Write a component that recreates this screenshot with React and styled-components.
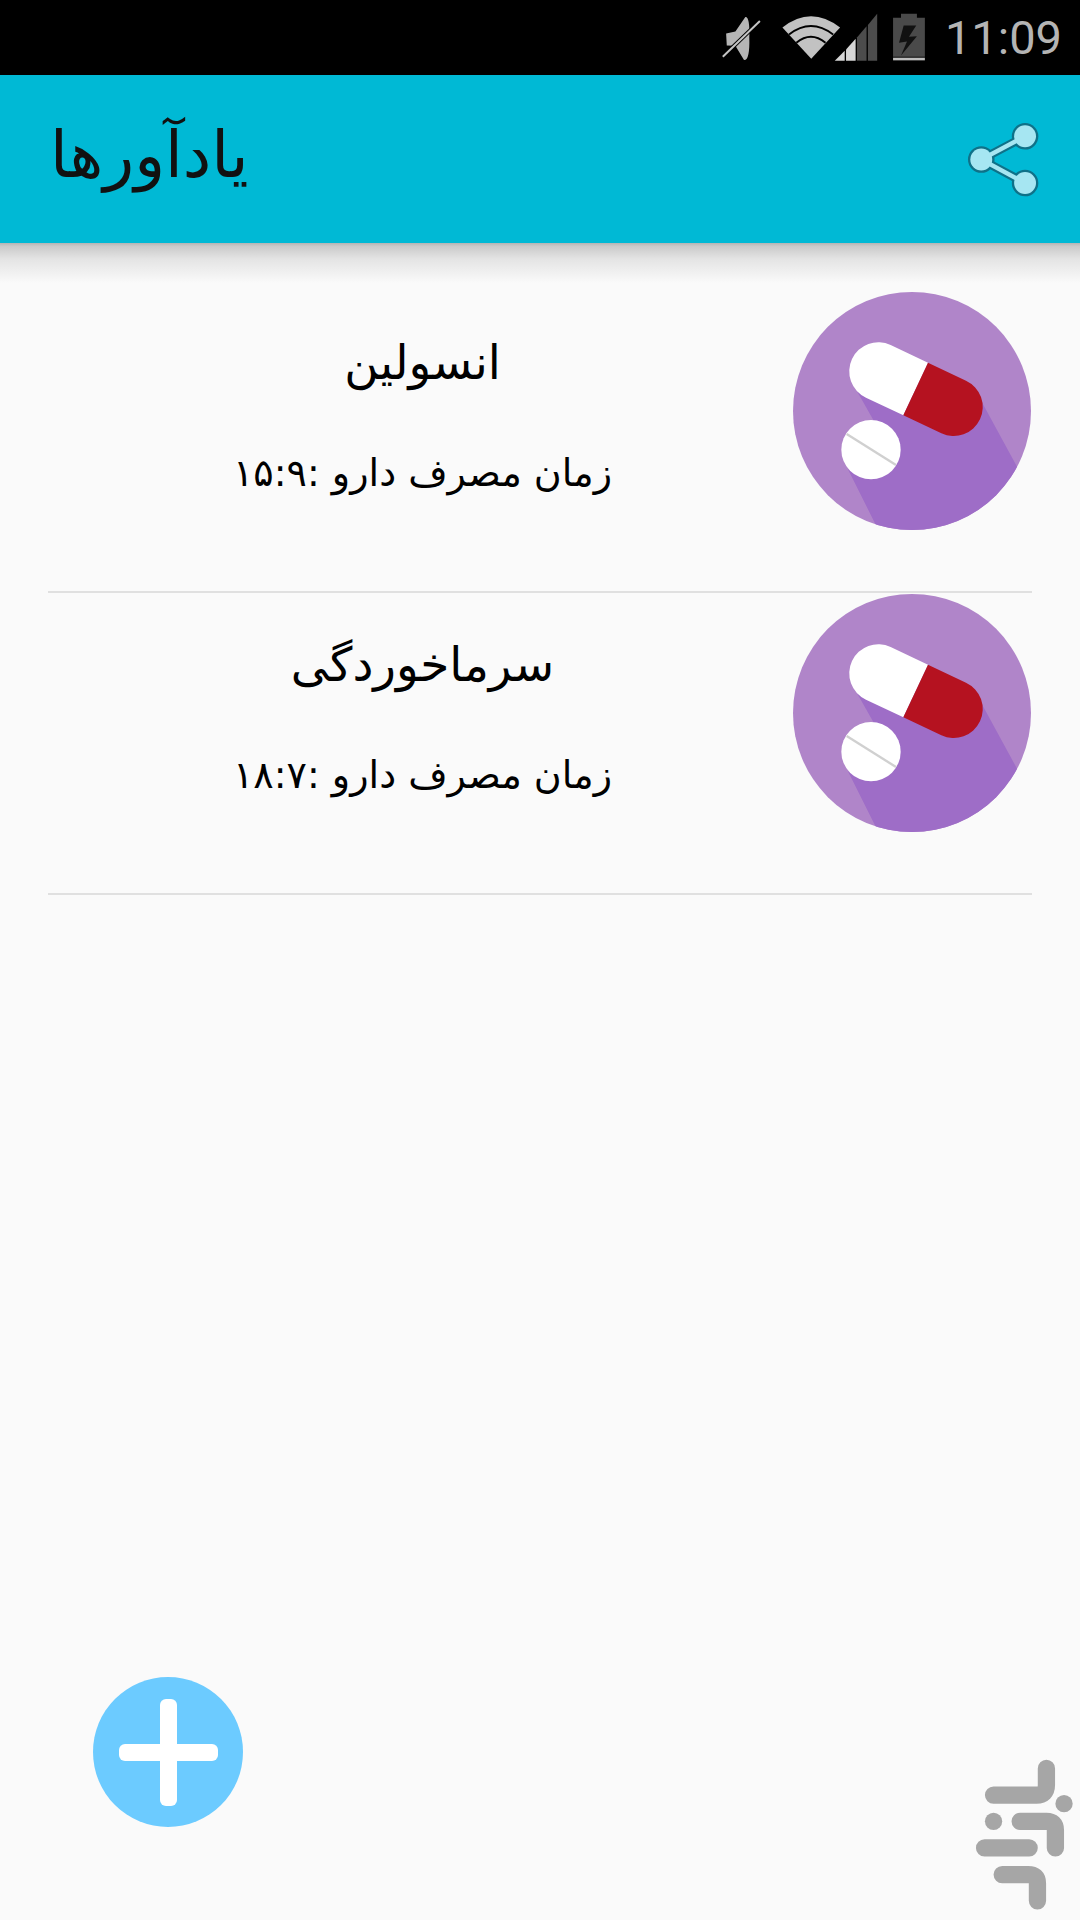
import React from 'react';
import styled, { createGlobalStyle } from 'styled-components';

const reminders = [
    { id: 1, name: 'انسولین', time: '۱۵:۹' },
    { id: 2, name: 'سرماخوردگی', time: '۱۸:۷' },
];

function StatusIcons() {
    return (
        <StatusSvg viewBox="115 30 625 160">
            <path d="M132 98 L160 92 L190 48 Q204 46 202 110 Q204 180 186 178 L160 135 L134 134 Z" fill="#b5b5b5" />
            <path d="M122 168 L234 60" stroke="#000" strokeWidth="12" fill="none" />
            <path d="M122 168 L234 60" stroke="#c4c4c4" strokeWidth="6" fill="none" />
            <path d="M302 80 Q388 12 476 80 L389 174 Z" fill="#c2c2c2" />
            <path d="M322 101 Q388 50 455 101" stroke="#000" strokeWidth="6" fill="none" />
            <path d="M344 126 Q388 90 432 126" stroke="#000" strokeWidth="6" fill="none" />
            <path d="M460 180 L490 150 V180 Z" fill="#d6d6d6" />
            <path d="M494 146 L523 114 V180 H494 Z" fill="#d6d6d6" />
            <path d="M527 110 L556 76 V180 H527 Z" fill="#4c4c4c" />
            <path d="M560 72 L588 38 V180 H560 Z" fill="#4c4c4c" />
            <path d="M636 50 H660 V38 H708 V50 H732 V168 H636 Z" fill="#4a4a4a" />
            <rect x="636" y="171" width="96" height="8" fill="#bdbdbd" />
            <path d="M706 74 L668 74 L654 126 L678 122 L660 164 L708 106 L684 108 Z" fill="#111" />
        </StatusSvg>
    );
}

function ShareIcon() {
    return (
        <ShareSvg viewBox="860 360 220 230">
            <path d="M1035 405 L903 475 L1035 546" stroke="#0f7188" strokeWidth="26" fill="none" />
            <circle cx="1035" cy="405" r="40" fill="#0f7188" />
            <circle cx="903" cy="475" r="40" fill="#0f7188" />
            <circle cx="1035" cy="546" r="40" fill="#0f7188" />
            <path d="M1035 405 L903 475 L1035 546" stroke="#a6e6f2" strokeWidth="13" fill="none" />
            <circle cx="1035" cy="405" r="33" fill="#a6e6f2" />
            <circle cx="903" cy="475" r="33" fill="#a6e6f2" />
            <circle cx="1035" cy="546" r="33" fill="#a6e6f2" />
        </ShareSvg>
    );
}

function PillIcon({ id }) {
    return (
        <PillSvg viewBox="70 36 712 714">
            <defs>
                <clipPath id={id}>
                    <circle cx="426" cy="393" r="357" />
                </clipPath>
            </defs>
            <circle cx="426" cy="393" r="357" fill="#b085c9" />
            <path
                d="M262 335 L635 365 L790 650 L790 800 L350 800 L235 570 L310 420 Z"
                fill="#9e6dc7"
                clipPath={`url(#${id})`}
            />
            <path d="M474 248 L362 195 A87 87 0 0 0 288 353 L400 406 Z" fill="#fff" />
            <path d="M474 248 L588 302 A87 87 0 0 1 514 460 L400 406 Z" fill="#b51220" />
            <circle cx="303" cy="509" r="89" fill="#fff" />
            <path d="M230 462 L378 555" stroke="#d0d0d0" strokeWidth="7" />
        </PillSvg>
    );
}

function WatermarkIcon() {
    return (
        <WatermarkSvg viewBox="0 0 391 570">
            <g stroke="#a6a6a6" strokeWidth="52" strokeLinecap="round" fill="none">
                <path d="M290 115 V165 Q290 195 260 195 H131" />
                <path d="M211 274 H290 Q317 274 317 300 V354" />
                <path d="M104 354 H238" />
                <path d="M157 434 H235 Q263 434 263 460 V513" />
            </g>
            <circle cx="343" cy="221" r="26" fill="#a6a6a6" />
            <circle cx="131" cy="274" r="26" fill="#a6a6a6" />
        </WatermarkSvg>
    );
}

export default function App() {
    return (
        <Page>
            <GlobalStyle />
            <StatusBar>
                <StatusIcons />
                <Clock>11:09</Clock>
            </StatusBar>
            <AppBar>
                <Title dir="rtl">یادآورها</Title>
                <ShareIcon />
            </AppBar>
            <List>
                {reminders.map((item) => (
                    <Row key={item.id}>
                        <RowText dir="rtl">
                            <DrugName>{item.name}</DrugName>
                            <DrugTime>زمان مصرف دارو :{item.time}</DrugTime>
                        </RowText>
                        <PillIcon id={`pill-clip-${item.id}`} />
                    </Row>
                ))}
            </List>
            <Fab>
                <PlusSvg viewBox="0 0 99 107">
                    <rect x="0" y="45" width="99" height="17" rx="6" fill="#fff" />
                    <rect x="41" y="0" width="17" height="107" rx="6" fill="#fff" />
                </PlusSvg>
            </Fab>
            <WatermarkIcon />
        </Page>
    );
}

const GlobalStyle = createGlobalStyle`
    html, body {
        margin: 0;
        padding: 0;
        background: #fafafa;
    }
`;

const Page = styled.div`
    position: relative;
    width: 1080px;
    height: 1920px;
    overflow: hidden;
    display: flex;
    flex-direction: column;
    background: #fafafa;
    font-family: "DejaVu Sans", sans-serif;
`;

const StatusBar = styled.div`
    height: 75px;
    background: #000;
    display: flex;
    align-items: center;
    justify-content: flex-end;
    padding-right: 18px;
    gap: 17px;
`;

const StatusSvg = styled.svg`
    width: 208px;
    height: 53px;
`;

const Clock = styled.div`
    font-family: Roboto, sans-serif;
    font-weight: 400;
    font-size: 47px;
    color: #b4b4b4;
    line-height: 75px;
`;

const AppBar = styled.div`
    position: relative;
    height: 168px;
    background: #00b9d5;
    display: flex;
    align-items: center;
    justify-content: space-between;
    padding: 0 40px 0 50px;

    &::after {
        content: '';
        position: absolute;
        left: 0;
        right: 0;
        top: 100%;
        height: 40px;
        background: linear-gradient(#b4b4b4, #cacaca 8%, #e4e4e4 40%, #fafafa);
    }
`;

const Title = styled.div`
    font-size: 64px;
    line-height: 80px;
    margin-top: -8px;
    color: #111;
`;

const ShareSvg = styled.svg`
    width: 73px;
    height: 77px;
`;

const List = styled.div`
    padding: 48px 48px 0;
    display: flex;
    flex-direction: column;
`;

const Row = styled.div`
    height: 302px;
    box-sizing: border-box;
    display: flex;
    align-items: flex-start;
    border-bottom: 2px solid #e0e0e0;
    padding-top: 1px;
`;

const RowText = styled.div`
    flex: 1;
    text-align: center;
    padding-left: 4px;
`;

const DrugName = styled.div`
    font-size: 47px;
    line-height: 60px;
    margin-top: 41px;
    color: #000;
`;

const DrugTime = styled.div`
    font-size: 38px;
    line-height: 56px;
    margin-top: 52px;
    color: #000;
`;

const PillSvg = styled.svg`
    flex: none;
    width: 238px;
    height: 238px;
    margin-right: 1px;
`;

const Fab = styled.div`
    position: absolute;
    left: 93px;
    top: 1677px;
    width: 150px;
    height: 150px;
    border-radius: 50%;
    background: #6ccbff;
    display: flex;
    align-items: center;
    justify-content: center;
`;

const PlusSvg = styled.svg`
    width: 99px;
    height: 107px;
`;

const WatermarkSvg = styled.svg`
    position: absolute;
    right: 0;
    bottom: 0;
    width: 130px;
    height: 190px;
`;
